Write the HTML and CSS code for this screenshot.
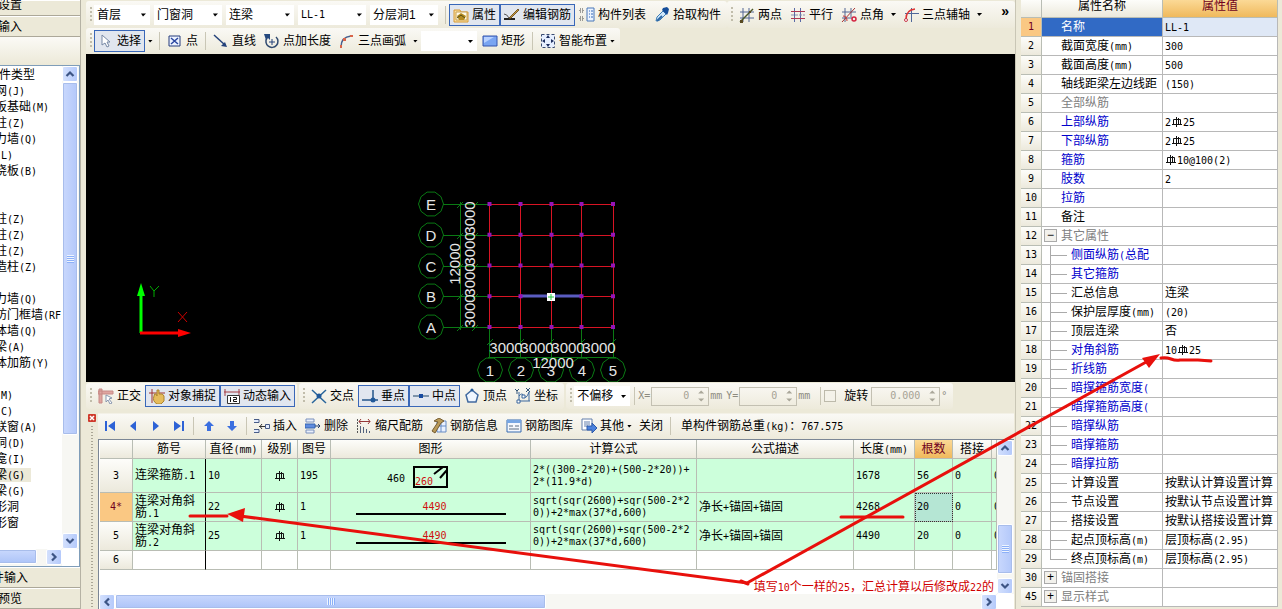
FILE: index.html
```html
<!DOCTYPE html>
<html lang="zh-CN">
<head>
<meta charset="utf-8">
<title>钢筋算量</title>
<link rel="stylesheet" href="styles.css">
</head>
<body>
<svg class="defs" aria-hidden="true">
  <symbol id="rebar" viewBox="0 0 12 12"><path d="M2.500 3.500h7v5h-7zM5.500 1v10M7.500 2v7M1 8.500h10" fill="none" stroke="#111"/></symbol>
  <symbol id="bubble" viewBox="-14 -14 28 28"><polygon points="12.500,0 10,7.300 3.900,11.900 -3.900,11.900 -10,7.300 -12.500,0 -10,-7.300 -3.900,-11.900 3.900,-11.900 10,-7.300" fill="none" stroke="#0a7a14"/></symbol>
  <symbol id="up" viewBox="0 0 10 10"><path d="M1.500 7 5 3.500 8.500 7" fill="none" stroke="#3d5585" stroke-width="2.200"/></symbol>
  <symbol id="down" viewBox="0 0 10 10"><path d="M1.500 3 5 6.500 8.500 3" fill="none" stroke="#3d5585" stroke-width="2.200"/></symbol>
  <symbol id="left" viewBox="0 0 10 10"><path d="M7 1.500 3.500 5 7 8.500" fill="none" stroke="#3d5585" stroke-width="2.200"/></symbol>
  <symbol id="right" viewBox="0 0 10 10"><path d="M3 1.500 6.500 5 3 8.500" fill="none" stroke="#3d5585" stroke-width="2.200"/></symbol>
</svg>
<div class="app">
  <aside class="sidebar">
    <button class="nav nav-top">工程设置</button>
    <button class="nav">绘图输入</button>
    <div class="side-tools"></div>
    <div class="tree-area">
      <ul class="tree">
        <li class="root">构件类型</li>
        <li>轴网<span class="n">(J)</span></li>
        <li>筏板基础<span class="n">(M)</span></li>
        <li>框柱<span class="n">(Z)</span></li>
        <li>剪力墙<span class="n">(Q)</span></li>
        <li>梁<span class="n">(L)</span></li>
        <li>现浇板<span class="n">(B)</span></li>
        <li></li>
        <li></li>
        <li>框柱<span class="n">(Z)</span></li>
        <li>暗柱<span class="n">(Z)</span></li>
        <li>端柱<span class="n">(Z)</span></li>
        <li>构造柱<span class="n">(Z)</span></li>
        <li></li>
        <li>剪力墙<span class="n">(Q)</span></li>
        <li>人防门框墙<span class="n">(RF</span></li>
        <li>砌体墙<span class="n">(Q)</span></li>
        <li>暗梁<span class="n">(A)</span></li>
        <li>砌体加筋<span class="n">(Y)</span></li>
        <li></li>
        <li>门<span class="n">(M)</span></li>
        <li>窗<span class="n">(C)</span></li>
        <li>门联窗<span class="n">(A)</span></li>
        <li>墙洞<span class="n">(D)</span></li>
        <li>壁龛<span class="n">(I)</span></li>
        <li><mark>连梁<span class="n">(G)</span></mark></li>
        <li>过梁<span class="n">(G)</span></li>
        <li>带形洞</li>
        <li>带形窗</li>
      </ul>
      <div class="vbar">
        <button class="sb" aria-label="向上"><svg><use href="#up"/></svg></button>
        <div class="thumb tree-thumb"><i></i></div>
        <div class="fill"></div>
        <button class="sb" aria-label="向下"><svg><use href="#down"/></svg></button>
      </div>
      <div class="hbar">
        <div class="thumb tree-hthumb"></div>
        <div class="fill"></div>
        <button class="sb" aria-label="向右"><svg><use href="#right"/></svg></button>
      </div>
    </div>
    <button class="nav nav-single">单构件输入</button>
    <button class="nav">报表预览</button>
  </aside>

  <main class="main">
    <div class="bar row-one">
      <div class="strip">
        <i class="grip"></i>
        <span class="combo short"><select aria-label="楼层"><option>首层</option></select></span>
        <span class="combo"><select aria-label="类型"><option>门窗洞</option></select></span>
        <span class="combo"><select aria-label="构件"><option>连梁</option></select></span>
        <span class="combo latin"><select aria-label="名称"><option>LL-1</option></select></span>
        <span class="combo"><select aria-label="分层"><option>分层洞1</option></select></span>
        <i class="sep"></i>
        <button class="tool on"><svg viewBox="0 0 16 16"><path d="M1 3h6l1 2h7v10H1z" fill="#f8dfa0" stroke="#d89a35"/><path d="M3 5h11v8H3z" fill="#fffbe8" stroke="#c9a050"/><path d="m4 9 4-3 5 3-2 4H6z" fill="#b58b20"/><path d="m4 11 4-3 4 3" fill="none" stroke="#53501b"/></svg>属性</button>
        <button class="tool on"><svg viewBox="0 0 16 16"><path d="M0 12h11" stroke="#222" stroke-width="2"/><path d="m5 11 9-9 1 1-8 8z" fill="#c39a45" stroke="#785a28"/><path d="M0 7q3 0 5 4" fill="none" stroke="#555"/></svg>编辑钢筋</button>
        <button class="tool"><svg viewBox="0 0 16 16"><path d="M1 2h3v3H1zM1 10h3v3H1z" fill="none" stroke="#444" stroke-dasharray="1 1"/><path d="M8 1h7v13H8z" fill="#eaf3ff" stroke="#4876b8"/><path d="M10 4h1m1 0h2M10 7h1m1 0h2M10 10h1m1 0h2" stroke="#3267b8"/></svg>构件列表</button>
        <button class="tool"><svg viewBox="0 0 16 16"><path d="m2 14 1-4 6-6 3 3-6 6z" fill="#cfe7fa" stroke="#3e7db5"/><path d="m8 3 5 5 1-2 1-4-2-2-4 1z" fill="#164e9a"/><path d="m3 14 5-5" stroke="#2b67a6" stroke-width="2"/></svg>拾取构件</button>
      </div>
      <div class="strip">
        <i class="grip"></i>
        <button class="tool"><svg viewBox="0 0 16 16"><path d="M4 1v14M10 1v14M1 5h14M1 11h14" stroke="#536694"/><path d="M1 15 14 2" stroke="#4a5728" stroke-width="1.500"/><path d="M1 13h3v3H1zM10 4h2v2h-2z" fill="#574920"/></svg>两点</button>
        <button class="tool"><svg viewBox="0 0 16 16"><path d="M4.500 1v14M10.500 1v14" stroke="#596aa7"/><path d="M1 4.500h14M1 11.500h14" stroke="#ad3854"/><path d="M1 8h14" stroke="#8d8fae" stroke-dasharray="3 1"/></svg>平行</button>
        <button class="tool"><svg viewBox="0 0 16 16"><path d="M4 1v14M10 1v9M1 5h14M1 11h10" stroke="#536694"/><path d="M1 15 14 1" stroke="#a33"/><path d="M2 9q4 0 4 5" fill="none" stroke="#c33"/><circle cx="13" cy="12" r="2" fill="none" stroke="#d32240" stroke-width="1.500"/></svg>点角</button>
        <i class="caret"></i>
        <button class="tool"><svg viewBox="0 0 16 16"><path d="M8.500 1v14M2 6.500h14" stroke="#50689a"/><path d="M3 12Q3 3 12 2" fill="none" stroke="#d33" stroke-width="1.500"/><circle cx="3" cy="13" r="1.500" fill="#fff" stroke="#c9384a"/></svg>三点辅轴</button>
        <i class="caret"></i>
        <button class="more" aria-label="更多">»</button>
      </div>
    </div>
    <div class="bar row-two">
      <div class="strip">
        <i class="grip"></i>
        <button class="tool on"><svg viewBox="0 0 16 16"><path d="M4 2v10l3-2 2 4 2-1-2-4h3z" fill="#fff" stroke="#7688a5"/></svg>选择</button>
        <i class="caret"></i>
        <i class="sep"></i>
        <button class="tool"><svg viewBox="0 0 16 16"><path d="M2 3h11v10H2z" fill="#edf3ff" stroke="#263c7d"/><path d="m4 5 7 6m0-6-7 6" stroke="#2946a0" stroke-width="1.500"/></svg>点</button>
        <i class="sep"></i>
        <button class="tool"><svg viewBox="0 0 16 16"><path d="m1 2 11 10" stroke="#24427a" stroke-width="1.500"/><path d="m14 14-6-1 4-4z" fill="#24427a"/></svg>直线</button>
        <button class="tool"><svg viewBox="0 0 16 16"><path d="M3 5a6 6 0 1 0 9-1" fill="none" stroke="#314b70" stroke-width="1.500"/><path d="M0 1h6v6L4 5 2 7z" fill="#26497e"/><path d="M8 6v6M5 9h6" stroke="#24427a"/></svg>点加长度</button>
        <button class="tool"><svg viewBox="0 0 16 16"><path d="M2 14Q2 4 12 3" fill="none" stroke="#47608d" stroke-width="1.500"/><path d="M1 12h2v3H1zM4 5h3v3H4zM11 2h3v2h-3z" fill="#d8654b"/></svg>三点画弧</button>
        <i class="caret"></i>
        <span class="combo short"><select aria-label="画弧方式"><option></option></select></span>
        <button class="tool"><svg viewBox="0 0 16 16"><path d="M1 3h14v10H1z" fill="#7aa5f2" stroke="#3555ad"/><path d="M2 4h10L2 10z" fill="#b8d1ff"/></svg>矩形</button>
        <i class="sep"></i>
        <button class="tool"><svg viewBox="0 0 16 16"><path d="M1.500 1.500h13v13h-13z" fill="#e6efff" stroke="#384a70" stroke-dasharray="3 2"/><path d="m8 2 2 3H6zM8 14l2-3H6zM2 8l3-2v4zM14 8l-3-2v4z" fill="#1e2f60"/></svg>智能布置</button>
        <i class="caret tight"></i>
      </div>
    </div>

    <div class="canvas">
      <svg viewBox="86 54 928 328" preserveAspectRatio="xMinYMin meet" aria-label="轴网">
        <g stroke="#0a7a14" fill="none">
          <path d="M443 204.500h47M443 235.500h47M443 266.500h47M443 296.500h47M443 327.500h47M460.500 202v128M489.500 327v31M520.500 327v31M551.500 327v31M581.500 327v31M613.500 327v31M488 357.500h128"/>
          <path d="m457 208 6-6m-6 37 6-6m-6 37 6-6m-6 36 6-6m-6 37 6-6M472 208l6-6m-6 37 6-6m-6 37 6-6m-6 36 6-6m-6 37 6-6M487 345l6-6m25 6 6-6m24 6 6-6m25 6 6-6m25 6 6-6"/>
        </g>
        <g>
          <use href="#bubble" x="417" y="190" width="28" height="28"/><use href="#bubble" x="417" y="221" width="28" height="28"/><use href="#bubble" x="417" y="252" width="28" height="28"/><use href="#bubble" x="417" y="282" width="28" height="28"/><use href="#bubble" x="417" y="313" width="28" height="28"/>
          <use href="#bubble" x="476" y="356" width="28" height="28"/><use href="#bubble" x="507" y="356" width="28" height="28"/><use href="#bubble" x="537" y="356" width="28" height="28"/><use href="#bubble" x="568" y="356" width="28" height="28"/><use href="#bubble" x="599" y="356" width="28" height="28"/>
        </g>
        <path d="M490 204.500h124M490 235.500h124M490 266.500h124M490 296.500h124M490 327.500h124M489.500 204v124M520.500 204v124M551.500 204v124M581.500 204v124M613.500 204v124" stroke="#d81424" fill="none"/>
        <path d="M521 296h61" stroke="#5a5cc0" stroke-width="3"/>
        <path d="M489.500 202v128M520.500 202v128M551.500 202v128M581.500 202v128M613 202v128" stroke="#9414b8" stroke-width="4" stroke-dasharray="4 26.750"/>
        <path d="M547 293h8v8h-8z" fill="#fff"/><path d="M551 294v6M548 297h6" stroke="#27c840"/>
        <g class="cad-text">
          <text x="431" y="210">E</text><text x="431" y="241">D</text><text x="431" y="272">C</text><text x="431" y="302">B</text><text x="431" y="333">A</text>
          <text x="490" y="376">1</text><text x="521" y="376">2</text><text x="551" y="376">3</text><text x="582" y="376">4</text><text x="613" y="376">5</text>
          <text x="506" y="353">3000</text><text x="537" y="353">3000</text><text x="568" y="353">3000</text><text x="599" y="353">3000</text><text x="553" y="368">12000</text>
          <text transform="translate(475 311) rotate(-90)">3000</text><text transform="translate(475 280) rotate(-90)">3000</text><text transform="translate(475 249) rotate(-90)">3000</text><text transform="translate(475 218) rotate(-90)">3000</text><text transform="translate(460 264) rotate(-90)">12000</text>
        </g>
        <path d="M141 333v-40" stroke="#0f0" stroke-width="3"/><path d="m141 283 4 13h-8z" fill="#0f0"/>
        <path d="M140 333h40" stroke="#f00" stroke-width="3"/><path d="m191 333-13-4v8z" fill="#f00"/>
        <path d="m150 286 4 5 5-5m-5 5v6" stroke="#0a0" fill="none"/><path d="m178 312 9 10m0-10-9 10" stroke="#c00"/>
      </svg>
    </div>

    <div class="bar snap">
      <div class="strip">
        <i class="grip"></i>
        <button class="tool"><svg viewBox="0 0 16 16"><path d="M1 1h3v14H1zM0 3h15v3H0z" fill="#dfa5a0" stroke="#c78a86"/><path d="m8 7 6 3-3 1 3 4-2 1-2-4-2 2z" fill="#fff" stroke="#8795ad"/></svg>正交</button>
        <button class="tool on"><svg viewBox="0 0 16 16"><path d="M3 1v14M0 5h16" stroke="#9e3230"/><path d="M5 8q0-3 2-2l1 2V2h2v4q4-1 5 2v5l-3 3H8q-5-3-3-8" fill="#e5bc5c" stroke="#ad842f"/></svg>对象捕捉</button>
        <button class="tool on"><svg viewBox="0 0 16 16"><path d="M0 4h16M1 1v7M15 1v7" stroke="#a33b42"/><path d="M3.500 7.500h12v8h-12z" fill="#fff" stroke="#333"/><path d="M6.500 9v5M9 9.500h3.500v2h-3v2h3.500" stroke="#111" fill="none"/></svg>动态输入</button>
      </div>
      <div class="strip">
        <i class="grip"></i>
        <button class="tool"><svg viewBox="0 0 16 16"><path d="m1 2 14 13M15 2 1 15" stroke="#29659b" stroke-width="1.500"/><circle cx="8" cy="8" r="2.500" fill="#21599a"/></svg>交点</button>
        <button class="tool on"><svg viewBox="0 0 16 16"><path d="M11 2v10M0 12h16" stroke="#25558b" stroke-width="1.500"/><circle cx="11" cy="12" r="2.500" fill="#21599a"/></svg>垂点</button>
        <button class="tool on"><svg viewBox="0 0 16 16"><path d="M0 8h16" stroke="#5c7895" stroke-width="1.500"/><path d="M6 6h4v4H6z" fill="#174aa0"/></svg>中点</button>
        <button class="tool"><svg viewBox="0 0 16 16"><path d="m8 2 6 5-2 7H4L2 7z" fill="#eff6ff" stroke="#416aa0" stroke-width="1.500"/><circle cx="8" cy="2" r="1.500" fill="#21599a"/></svg>顶点</button>
        <button class="tool"><svg viewBox="0 0 16 16"><path d="M4 4v9h11M4 8q3-4 5 0t5-4v9" fill="none" stroke="#3a679d"/><path d="m0 1 2 2 2-2m-2 2v3M11 0l4 4m0-4-4 4" stroke="#315376" fill="none"/><path d="M2 12h3v3H2zM7 7h3v3H7z" fill="#fff" stroke="#3a679d"/></svg>坐标</button>
      </div>
      <div class="strip">
        <i class="grip"></i>
        <span class="combo short"><select aria-label="偏移方式"><option>不偏移</option></select></span>
        <i class="sep"></i>
        <label class="coord n">X=<span class="spin"><input value="0" disabled><i></i></span>mm</label>
        <label class="coord n">Y=<span class="spin"><input value="0" disabled><i></i></span>mm</label>
        <i class="sep wide"></i>
        <label class="turn"><input type="checkbox">旋转</label>
        <label class="coord n"><span class="spin large"><input value="0.000" aria-label="旋转角度" disabled><i></i></span>°</label>
      </div>
    </div>

    <section class="editor">
      <div class="dock"><button class="close" aria-label="关闭面板"><svg viewBox="0 0 8 8"><path d="m2 2 4 4m0-4-4 4" stroke="#fff" stroke-width="1.500"/></svg></button><i></i></div>
      <div class="edit-body">
        <div class="edit-tools">
          <button class="step" aria-label="首行"><svg viewBox="0 0 12 12"><path d="M1 1h2v10H1zM11 1v10L4 6z" fill="#2d62d6"/></svg></button>
          <button class="step" aria-label="上一行"><svg viewBox="0 0 12 12"><path d="M9 1v10L3 6z" fill="#2d62d6"/></svg></button>
          <button class="step" aria-label="下一行"><svg viewBox="0 0 12 12"><path d="M3 1v10l6-5z" fill="#2d62d6"/></svg></button>
          <button class="step" aria-label="末行"><svg viewBox="0 0 12 12"><path d="M9 1h2v10H9zM1 1v10l7-5z" fill="#2d62d6"/></svg></button>
          <i class="sep"></i>
          <button class="step" aria-label="上移"><svg viewBox="0 0 12 12"><path d="m6 1 5 5H8v5H4V6H1z" fill="#3b6fe0"/></svg></button>
          <button class="step" aria-label="下移"><svg viewBox="0 0 12 12"><path d="m6 11 5-5H8V1H4v5H1z" fill="#3b6fe0"/></svg></button>
          <i class="sep"></i>
          <button class="tool"><svg viewBox="0 0 16 16"><path d="M0 1.500h5v3H0M0 11.500h5v3H0M11.500 6.500h4v4h-4z" fill="#e4ecfc" stroke="#485c88"/><path d="M5 8.500h6M8 6 6 8.500 8 11" stroke="#333" fill="none"/></svg>插入</button>
          <button class="tool"><svg viewBox="0 0 16 16"><path d="M1 1h8v3H1zM1 12h8v3H1z" fill="#e9effb" stroke="#7b91bd"/><path d="M0 6h10v4H0z" fill="#5f8ce0" stroke="#3564b0"/><path d="M10 8h5m-2-2 2 2-2 2" stroke="#26416f" fill="none"/></svg>删除</button>
          <button class="tool"><svg viewBox="0 0 16 16"><path d="M1.500 1v14" stroke="#555" stroke-dasharray="2 1"/><path d="M3 3.500h11M5 1 3 3.500 5 6M12 1l2 2.500L12 6" stroke="#953838" fill="none"/><path d="M4.500 8v7M7.500 9v6M10.500 11v4M13.500 13v2" stroke="#53637e"/></svg>缩尺配筋</button>
          <button class="tool"><svg viewBox="0 0 16 16"><path d="M6 3h9v11H6z" fill="#e9f1ff" stroke="#668bc4"/><path d="M10 3v11M6 8h9" stroke="#668bc4"/><path d="m1 13 6-9-4-1 5-3 5 3-3 2-6 10z" fill="#b99a58" stroke="#765d32"/></svg>钢筋信息</button>
          <button class="tool"><svg viewBox="0 0 16 16"><path d="M1 2h14v12H1z" fill="#f4f7fd" stroke="#376ab0"/><path d="M1 2h14v3H1z" fill="#77a6e3"/><path d="M3 8h4M9 8h4M3 11h10" stroke="#5b6c80"/></svg>钢筋图库</button>
          <button class="tool"><svg viewBox="0 0 16 16"><path d="M1 1h10v11H1z" fill="#fff" stroke="#627fac"/><path d="M3 4h6M3 6h6M3 8h4" stroke="#627fac"/><path d="M6 8h5V5l5 5-5 5v-3H6z" fill="#4c82dd" stroke="#2e5aa8"/></svg>其他</button>
          <i class="caret tight"></i>
          <button class="tool">关闭</button>
          <i class="sep"></i>
          <span class="total">单构件钢筋总重<span class="n">(kg)</span>：<span class="n">767.575</span></span>
        </div>
        <div class="sheet-area">
          <div class="sheet">
            <table class="bars">
              <colgroup><col class="c-head"><col class="c-name"><col class="c-dia"><col class="c-grade"><col class="c-fig"><col class="c-shape"><col class="c-calc"><col><col class="c-len"><col class="c-num"><col class="c-lap"><col class="c-last"></colgroup>
              <thead><tr><th></th><th>筋号</th><th>直径<span class="n">(mm)</span></th><th>级别</th><th>图号</th><th>图形</th><th>计算公式</th><th>公式描述</th><th>长度<span class="n">(mm)</span></th><th class="hot">根数</th><th>搭接</th><th></th></tr></thead>
              <tbody>
                <tr class="tall"><th class="n">3</th><td>连梁箍筋<span class="n">.1</span></td><td class="n">10</td><td class="mid"><svg class="rb"><use href="#rebar"/></svg></td><td class="n">195</td><td class="shape"><svg viewBox="0 0 100 30" class="stirrup"><text x="6" y="21">460</text><path d="M33 6h33v20H33zM53 13l9-7M59 17l7-8" fill="none" stroke="#000" stroke-width="2"/><text x="34" y="24" class="red">260</text></svg></td><td class="n calc">2*((300-2*20)+(500-2*20))+<br>2*(11.9*d)</td><td></td><td class="n">1678</td><td class="n">56</td><td class="n">0</td><td class="n">0</td></tr>
                <tr><th class="n hot">4*</th><td>连梁对角斜<br>筋<span class="n">.1</span></td><td class="n">22</td><td class="mid"><svg class="rb"><use href="#rebar"/></svg></td><td class="n">1</td><td class="shape"><span class="rod n">4490</span></td><td class="n calc">sqrt(sqr(2600)+sqr(500-2*2<br>0))+2*max(37*d,600)</td><td>净长<span class="n">+</span>锚固<span class="n">+</span>锚固</td><td class="n">4268</td><td class="n picked">20</td><td class="n">0</td><td class="n">0</td></tr>
                <tr><th class="n">5</th><td>连梁对角斜<br>筋<span class="n">.2</span></td><td class="n">25</td><td class="mid"><svg class="rb"><use href="#rebar"/></svg></td><td class="n">1</td><td class="shape"><span class="rod n">4490</span></td><td class="n calc">sqrt(sqr(2600)+sqr(500-2*2<br>0))+2*max(37*d,600)</td><td>净长<span class="n">+</span>锚固<span class="n">+</span>锚固</td><td class="n">4490</td><td class="n">20</td><td class="n">0</td><td class="n">0</td></tr>
                <tr class="blank"><th class="n">6</th><td></td><td></td><td></td><td></td><td></td><td></td><td></td><td></td><td></td><td></td><td></td></tr>
              </tbody>
            </table>
          </div>
          <div class="vbar">
            <button class="sb" aria-label="向上"><svg><use href="#up"/></svg></button>
            <div class="fill"></div>
            <div class="thumb sheet-thumb"><i></i></div>
            <div class="rest"></div>
            <button class="sb" aria-label="向下"><svg><use href="#down"/></svg></button>
          </div>
          <div class="hbar">
            <button class="sb" aria-label="向左"><svg><use href="#left"/></svg></button>
            <div class="thumb sheet-hthumb"><i></i></div>
            <div class="fill"></div>
            <button class="sb" aria-label="向右"><svg><use href="#right"/></svg></button>
          </div>
        </div>
      </div>
    </section>
  </main>

  <aside class="props">
    <table>
      <colgroup><col class="p-head"><col class="p-name"><col></colgroup>
      <thead><tr><th></th><th>属性名称</th><th class="hot">属性值</th></tr></thead>
      <tbody>
        <tr class="current"><th class="hot">1</th><td>名称</td><td><span class="n">LL-1</span></td></tr>
        <tr><th>2</th><td>截面宽度<span class="n">(mm)</span></td><td><span class="n">300</span></td></tr>
        <tr><th>3</th><td>截面高度<span class="n">(mm)</span></td><td><span class="n">500</span></td></tr>
        <tr><th>4</th><td>轴线距梁左边线距</td><td><span class="n">(150)</span></td></tr>
        <tr class="dim"><th>5</th><td>全部纵筋</td><td></td></tr>
        <tr class="link"><th>6</th><td>上部纵筋</td><td><span class="n">2</span><svg class="rb"><use href="#rebar"/></svg><span class="n">25</span></td></tr>
        <tr class="link"><th>7</th><td>下部纵筋</td><td><span class="n">2</span><svg class="rb"><use href="#rebar"/></svg><span class="n">25</span></td></tr>
        <tr class="link"><th>8</th><td>箍筋</td><td><svg class="rb"><use href="#rebar"/></svg><span class="n">10@100(2)</span></td></tr>
        <tr class="link"><th>9</th><td>肢数</td><td><span class="n">2</span></td></tr>
        <tr class="link"><th>10</th><td>拉筋</td><td></td></tr>
        <tr><th>11</th><td>备注</td><td></td></tr>
        <tr class="group"><th>12</th><td><button aria-label="折叠">−</button>其它属性</td><td></td></tr>
        <tr class="sub link"><th>13</th><td>侧面纵筋<span class="n">(</span>总配</td><td></td></tr>
        <tr class="sub link"><th>14</th><td>其它箍筋</td><td></td></tr>
        <tr class="sub"><th>15</th><td>汇总信息</td><td>连梁</td></tr>
        <tr class="sub"><th>16</th><td>保护层厚度<span class="n">(mm)</span></td><td><span class="n">(20)</span></td></tr>
        <tr class="sub"><th>17</th><td>顶层连梁</td><td>否</td></tr>
        <tr class="sub link"><th>18</th><td>对角斜筋</td><td><span class="n">10</span><svg class="rb"><use href="#rebar"/></svg><span class="n">25</span></td></tr>
        <tr class="sub link"><th>19</th><td>折线筋</td><td></td></tr>
        <tr class="sub link"><th>20</th><td>暗撑箍筋宽度<span class="n">(</span></td><td></td></tr>
        <tr class="sub link"><th>21</th><td>暗撑箍筋高度<span class="n">(</span></td><td></td></tr>
        <tr class="sub link"><th>22</th><td>暗撑纵筋</td><td></td></tr>
        <tr class="sub link"><th>23</th><td>暗撑箍筋</td><td></td></tr>
        <tr class="sub link"><th>24</th><td>暗撑拉筋</td><td></td></tr>
        <tr class="sub"><th>25</th><td>计算设置</td><td>按默认计算设置计算</td></tr>
        <tr class="sub"><th>26</th><td>节点设置</td><td>按默认节点设置计算</td></tr>
        <tr class="sub"><th>27</th><td>搭接设置</td><td>按默认搭接设置计算</td></tr>
        <tr class="sub"><th>28</th><td>起点顶标高<span class="n">(m)</span></td><td>层顶标高<span class="n">(2.95)</span></td></tr>
        <tr class="sub end"><th>29</th><td>终点顶标高<span class="n">(m)</span></td><td>层顶标高<span class="n">(2.95)</span></td></tr>
        <tr class="group"><th>30</th><td><button aria-label="展开">+</button>锚固搭接</td><td></td></tr>
        <tr class="group"><th>45</th><td><button aria-label="展开">+</button>显示样式</td><td></td></tr>
      </tbody>
    </table>
  </aside>

  <svg class="marks" viewBox="0 0 1282 609" preserveAspectRatio="none" aria-hidden="true">
    <g stroke="#e8100c" stroke-width="3" stroke-linecap="round" fill="none">
      <path d="M240 516 747 583 1148 361"/><path d="M741 581l7 3"/>
      <path d="M190 516h37M841 517h62M1161 358q5-1 10 1t9 1h18l13 1"/>
    </g>
    <path d="m227 514 18-6-2 14zM1160 354l-18 4 7 10z" fill="#e8100c"/>
  </svg>
  <p class="note">填写<span class="n">10</span>个一样的<span class="n">25</span>，汇总计算以后修改成<span class="n">22</span>的</p>
</div>
</body>
</html>
```
FILE: styles.css
```css
* { box-sizing: border-box; }
body {
  margin: 0;
  background: #ece9d8;
  color: #000;
  font: 12px/16px "Liberation Sans", "Noto Sans CJK SC", sans-serif;
}
button, select, input { font: inherit; color: inherit; margin: 0; }
button { border: 0; background: none; padding: 0; white-space: nowrap; }
.defs { position: absolute; width: 0; height: 0; }
.n { font-family: "DejaVu Sans Mono", monospace; font-size: 10px; }
.rb { width: 12px; height: 12px; vertical-align: -2px; }

.app {
  position: relative;
  display: flex;
  height: 100vh;
  min-height: 608px;
  overflow: hidden;
}

/* left navigation */
.sidebar {
  flex: none;
  display: flex;
  flex-direction: column;
  width: 113px;
  margin: 0 5px 0 -32px;
  border-right: 1px solid #b5b2a4;
}
.nav {
  flex: none;
  height: 21px;
  padding-left: 6px;
  text-align: left;
  border-top: 1px solid #fff;
  border-bottom: 1px solid #aca899;
}
.nav-top { height: 16px; line-height: 8px; padding-bottom: 6px; }
.nav-single { padding-left: 0; }
.side-tools { flex: none; height: 28px; background: linear-gradient(#fbfaf6, #ece9d8); }
.tree-area {
  flex: 1;
  min-height: 0;
  display: grid;
  grid-template: 1fr 17px / 1fr 17px;
  background: #fff;
  border: 1px solid #7f9db9;
}
.tree {
  margin: 0;
  padding: 1px 0 0;
  list-style: none;
  overflow: hidden;
  white-space: nowrap;
}
.tree li { height: 16px; padding-left: 14px; }
.tree .root { padding-left: 18px; }
.tree mark { background: #ece9d8; color: inherit; padding-right: 6px; }

/* scroll bars */
.vbar { display: flex; flex-direction: column; background: #f7f7f3; }
.hbar { display: flex; background: #f7f7f3; }
.sb {
  flex: none;
  display: grid;
  place-items: center;
  width: 16px;
  height: 16px;
  border: 1px solid #fff;
  border-radius: 2px;
  background: linear-gradient(90deg, #d3e0fd, #b5cafb);
}
.sb svg { width: 10px; height: 10px; }
.fill { flex: 1; }
.thumb {
  display: grid;
  place-items: center;
  border: 1px solid #fff;
  outline: 1px solid #a8bdeb;
  outline-offset: -2px;
  border-radius: 2px;
}
.vbar .thumb { width: 16px; background: linear-gradient(90deg, #c9d8fd, #b3c8fa); }
.hbar .thumb { height: 15px; background: linear-gradient(#c9d8fd, #adc4f8); }
.vbar .thumb i { width: 7px; height: 8px; background: repeating-linear-gradient(#eef4fe 0 1px, #8cb0f8 1px 2px); }
.hbar .thumb i { width: 8px; height: 7px; background: repeating-linear-gradient(90deg, #eef4fe 0 1px, #8cb0f8 1px 2px); }
.tree-thumb { height: 353px; }
.tree-hthumb { width: 68px; }
.sheet-thumb { height: 50px; }
.rest { height: 4px; }
.sheet-hthumb { width: 431px; }

/* tool bars */
.main { flex: 1; min-width: 0; display: flex; flex-direction: column; }
.bar { flex: none; display: flex; height: 27px; background: #ece9d8; overflow: hidden; }
.strip {
  display: flex;
  align-items: center;
  padding: 0 2px;
  border-radius: 3px;
  background: linear-gradient(#faf9f5, #edeadb);
}
.row-one { height: 28px; padding-top: 1px; }
.row-one .strip:last-child { flex: 1; }
.row-two { height: 26px; }
.grip {
  flex: none;
  width: 2px;
  height: 16px;
  margin: 0 2px;
  background: repeating-linear-gradient(#c1bdab 0 2px, transparent 2px 4px);
}
.sep { flex: none; width: 1px; height: 18px; margin: 0 3px; background: #c9c6b5; }
.sep.wide { margin: 0 3px 0 6px; }
.tool {
  flex: none;
  display: flex;
  align-items: center;
  gap: 3px;
  height: 22px;
  padding: 0 3px;
  border: 1px solid transparent;
}
.tool svg { width: 16px; height: 16px; }
.tool.on { background: #e1e6ef; border-color: #3967b8; }
.caret {
  flex: none;
  width: 11px;
  height: 3px;
  background: #000;
  clip-path: polygon(3px 0, 8px 0, 5px 3px);
}
.caret.tight { margin-left: -4px; }
.combo { flex: none; display: grid; align-items: center; width: 68px; margin-right: 4px; height: 20px; background: #fff; }
.combo.short { width: 56px; }
.row-two .combo, .snap .combo { margin-right: 1px; }
.combo select {
  grid-area: 1 / 1;
  appearance: none;
  width: 100%;
  height: 18px;
  padding: 0 0 0 3px;
  border: 0;
  background: transparent;
}
.combo::after {
  content: "";
  grid-area: 1 / 1;
  justify-self: end;
  width: 12px;
  height: 18px;
  background: #000;
  clip-path: polygon(3px 8px, 8px 8px, 5px 11px);
  pointer-events: none;
}
.latin select { font-family: "DejaVu Sans Mono", monospace; font-size: 10px; }
.more { margin: 0 4px 8px auto; font-weight: 700; font-size: 14px; }

.canvas { flex: 1; min-height: 0; background: #000; }
.canvas svg { display: block; width: 928px; height: 328px; }
.cad-text { font-size: 15px; fill: #e6e6e6; text-anchor: middle; }

.snap { height: 28px; padding-top: 1px; }
.snap .strip { height: 26px; margin-right: 2px; }
.coord { display: flex; align-items: center; gap: 1px; margin-right: 4px; color: #8d8b80; }
.spin { display: flex; align-items: center; width: 58px; height: 19px; border: 1px solid #c3c0b2; }
.spin.large { width: 69px; margin-left: 3px; }
.spin input {
  width: 100%;
  min-width: 0;
  padding: 0 6px 0 0;
  border: 0;
  background: transparent;
  color: #a5a294;
  text-align: right;
}
.spin i {
  flex: none;
  width: 13px;
  height: 13px;
  background: #aaa79a;
  clip-path: polygon(3px 4px, 6px 1px, 9px 4px, 3px 4px, 3px 9px, 9px 9px, 6px 12px, 3px 9px);
}
.turn { display: flex; align-items: center; gap: 8px; }
.turn input { appearance: none; width: 12px; height: 12px; border: 1px solid #bdbaab; background: #f4f2e9; }

/* rebar editor */
.editor { flex: none; display: flex; height: 199px; }
.dock { flex: none; display: flex; flex-direction: column; align-items: center; width: 12px; padding-top: 4px; }
.dock i { flex: 1; width: 2px; margin-top: 4px; background: repeating-linear-gradient(#aaa696 0 1px, transparent 1px 3px); }
.close { display: grid; width: 8px; height: 8px; border-radius: 1px; background: #cf3a2c; }
.edit-body { flex: 1; min-width: 0; display: flex; flex-direction: column; padding-right: 1px; }
.edit-tools {
  flex: none;
  display: flex;
  align-items: center;
  height: 29px;
  padding-top: 3px;
  background: linear-gradient(#ece9d8 3px, #faf9f5 4px, #edeadb);
}
.step { flex: none; display: grid; place-items: center; width: 23px; height: 20px; }
.step svg { width: 12px; height: 12px; }
.total { padding-left: 7px; white-space: nowrap; }
.sheet-area {
  flex: 1;
  min-height: 0;
  display: grid;
  grid-template: 1fr 15px / 1fr 17px;
  border-top: 1px solid #7b8695;
  border-left: 1px solid #7b8695;
  background: #fff;
}
.sheet { min-width: 0; overflow: hidden; padding-left: 1px; }
table { border-collapse: separate; border-spacing: 0; table-layout: fixed; width: 100%; }
th, td { padding: 0; font-weight: 400; overflow: hidden; white-space: nowrap; border: 0 solid #b9bdb4; border-width: 0 1px 1px 0; }
th { background: linear-gradient(#fdfdfa, #ece9dc); }
.bars { line-height: 12px; }
.bars thead tr { height: 19px; }
.bars tbody tr { height: 29px; }
.bars tbody .tall { height: 34px; }
.bars tbody .blank { height: 19px; }
.bars td { padding-left: 2px; text-align: left; background: #ccffdb; }
.bars .blank td { background: #fff; }
.bars tbody td:nth-child(2) { border-right-color: #000; }
.bars .mid { padding: 0; text-align: center; }
.bars .shape { padding: 0; text-align: center; }
.bars .hot, .props .hot { background: #fac883; color: #700020; }
.bars thead .hot, .props thead .hot { background: linear-gradient(#fbd996, #f0b95c); }
.bars .picked { background: #b5e6d4; outline: 1px dotted #333; outline-offset: -1px; }
.c-head { width: 33px; }
.c-name { width: 73px; }
.c-dia { width: 56px; }
.c-grade { width: 36px; }
.c-fig { width: 33px; }
.c-shape { width: 200px; }
.c-calc { width: 166px; }
.c-len { width: 61px; }
.c-num { width: 38px; }
.c-lap { width: 39px; }
.c-last { width: 5px; }
.stirrup { width: 100px; height: 30px; vertical-align: middle; font: 10px "DejaVu Sans Mono", monospace; }
.red { fill: #d01010; }
.rod { display: inline-block; width: 150px; padding-left: 8px; color: #d01010; border-bottom: 2px solid #000; }

/* properties */
.props { flex: none; width: 267px; padding: 0 4px 0 5px; border-left: 1px solid #c9c6b5; }
.props table { background: #fff; }
.props tr { height: 19px; }
.props thead tr { height: 18px; line-height: 10px; }
.props thead th { padding-bottom: 6px; }
.props tbody th { font: 10px/16px "DejaVu Sans Mono", monospace; }
.props td { padding-left: 2px; border-color: #b8b8b8; }
.props td:nth-child(2) { padding-left: 19px; }
.p-head { width: 21px; }
.p-name { width: 121px; }
.props .current td { background: #dfe8f6; }
.props .current td:nth-child(2) { background: #316ac5; color: #fff; }
.props .dim td:nth-child(2), .props .group td { color: #808080; }
.props .link td:nth-child(2) { color: #00c; }
.props .group td:nth-child(2) { padding-left: 2px; }
.props .group button {
  width: 13px;
  height: 13px;
  margin-right: 4px;
  border: 1px solid #aaa;
  background: #f2f1ec;
  color: #000;
  line-height: 10px;
  vertical-align: 1px;
}
.props .sub td:nth-child(2) {
  padding-left: 29px;
  background:
    linear-gradient(#aaa, #aaa) 8px 0 / 1px 100% no-repeat,
    linear-gradient(#aaa, #aaa) 8px 9px / 17px 1px no-repeat;
}
.props .end td:nth-child(2) {
  background:
    linear-gradient(#aaa, #aaa) 8px 0 / 1px 9px no-repeat,
    linear-gradient(#aaa, #aaa) 8px 9px / 17px 1px no-repeat;
}

/* annotations drawn over the window */
.marks { position: absolute; inset: 0; width: 100%; height: 100%; pointer-events: none; }
.note { position: absolute; right: 288px; bottom: 13px; margin: 0; color: #d00000; white-space: nowrap; }
```
